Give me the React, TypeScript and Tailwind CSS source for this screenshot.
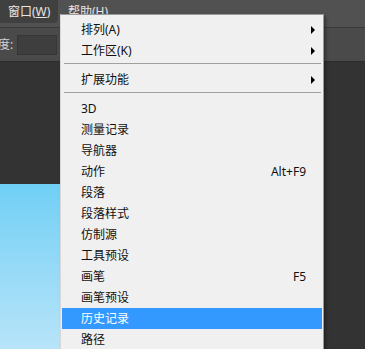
import React from "react";

type Item =
  | { kind: "item"; label: string; shortcut?: string; sub?: boolean; active?: boolean }
  | { kind: "sep" };

const items: Item[] = [
  { kind: "item", label: "排列(A)", sub: true },
  { kind: "item", label: "工作区(K)", sub: true },
  { kind: "sep" },
  { kind: "item", label: "扩展功能", sub: true },
  { kind: "sep" },
  { kind: "item", label: "3D" },
  { kind: "item", label: "测量记录" },
  { kind: "item", label: "导航器" },
  { kind: "item", label: "动作", shortcut: "Alt+F9" },
  { kind: "item", label: "段落" },
  { kind: "item", label: "段落样式" },
  { kind: "item", label: "仿制源" },
  { kind: "item", label: "工具预设" },
  { kind: "item", label: "画笔", shortcut: "F5" },
  { kind: "item", label: "画笔预设" },
  { kind: "item", label: "历史记录", active: true },
  { kind: "item", label: "路径" },
];

function MenuRow({ item }: { item: Item }) {
  if (item.kind === "sep") {
    return (
      <div className="h-2 pt-[2px] pl-[2px] pr-[1px]">
        <div className="h-px bg-[#a0a0a0]" />
      </div>
    );
  }
  return (
    <div
      className={`relative h-[21px] flex items-center pl-[19px] pr-4 ${
        item.active ? "bg-[#3399ff] text-white" : "text-[#111]"
      }`}
    >
      <span className="flex-1">{item.label}</span>
      {item.shortcut && <span>{item.shortcut}</span>}
      {item.sub && (
        <span className="absolute right-[7px] top-[7px] w-0 h-0 border-y-[4px] border-y-transparent border-l-[4px] border-l-black" />
      )}
    </div>
  );
}

export default function App() {
  return (
    <div
      className="relative w-[365px] h-[349px] overflow-hidden bg-[#333333] text-[12px]"
      style={{ fontFamily: '"Noto Sans", "Noto Sans CJK SC", sans-serif' }}
    >
      {/* 菜单栏 */}
      <div className="h-[28px] bg-[#515151] border-b border-[#3a3a3a] flex items-start">
        <div className="h-[23px] w-[58px] bg-[#404040] rounded-br-sm flex items-center pl-[8px] text-[#e6e6e6]">
          窗口(<span className="underline">W</span>)
        </div>
        <div className="h-[23px] flex items-center pl-[10px] text-[#e6e6e6]">
          帮助(<span className="underline">H</span>)
        </div>
      </div>

      {/* 选项栏 */}
      <div className="h-[34px] bg-[#4a4a4a] border-b border-[#2c2c2c] flex items-center gap-1 text-[#d0d0d0]">
        <span className="-ml-[2px]">度:</span>
        <div className="w-[40px] h-[20px] bg-[#3e3e3e] border border-[#363636]" />
      </div>

      {/* 工作区 */}
      <div className="flex">
        <div className="w-[200px] h-[180px] mt-[122px] bg-gradient-to-b from-[#6fcff5] to-[#bde6f9]" />
      </div>

      {/* 下拉菜单 */}
      <div className="absolute left-[60px] top-[14px] w-[264px] h-[360px] bg-[#f0f0f0] border border-[#9a9a9a] border-l-[#d8d8d8] pt-1 px-px shadow-[2px_2px_3px_rgba(0,0,0,0.35)]">
        {items.map((item, i) => (
          <MenuRow key={i} item={item} />
        ))}
      </div>
    </div>
  );
}
